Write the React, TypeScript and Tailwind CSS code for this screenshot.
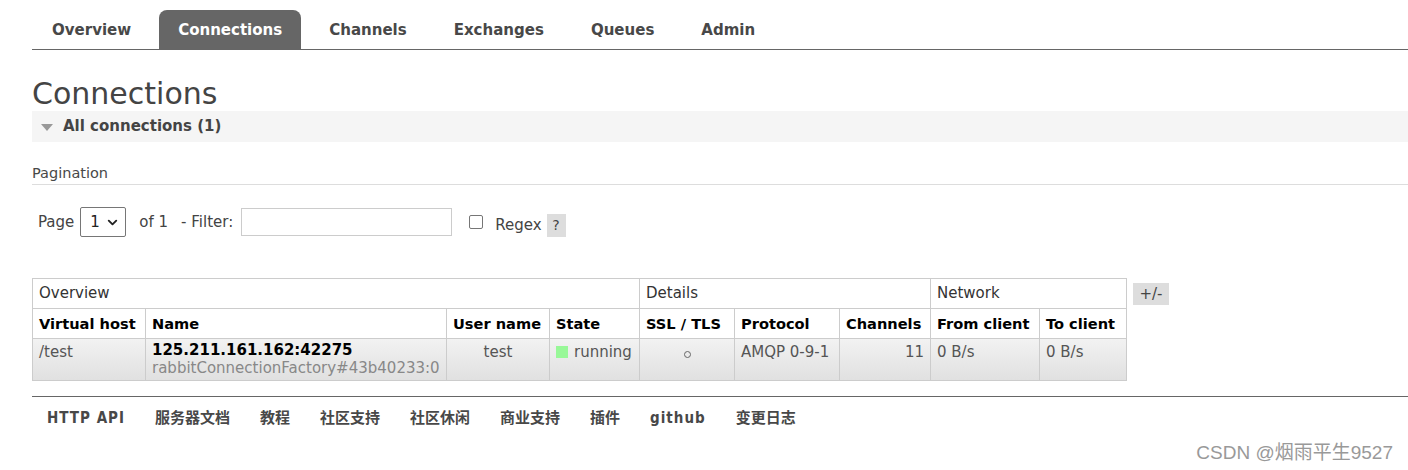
import { ChevronDown } from "lucide-react";

const tabs = ["Overview", "Connections", "Channels", "Exchanges", "Queues", "Admin"];
const footerLinks = [
  { label: "HTTP API", latin: true },
  { label: "服务器文档", latin: false },
  { label: "教程", latin: false },
  { label: "社区支持", latin: false },
  { label: "社区休闲", latin: false },
  { label: "商业支持", latin: false },
  { label: "插件", latin: false },
  { label: "github", latin: true },
  { label: "变更日志", latin: false },
];

const body = { fontFamily: '"DejaVu Sans", Verdana, "Noto Sans CJK SC", sans-serif' };
const narrow = {
  fontFamily: '"DejaVu Sans Condensed", "DejaVu Sans", "Noto Sans CJK SC", sans-serif',
  fontStretch: "condensed",
};

function Tabs() {
  return (
    <nav className="ml-[32px] mt-[10px] flex h-[40px] items-stretch gap-[9px] border-b border-[#666] pl-[1px]" style={narrow}>
      {tabs.map((t) => (
        <div
          key={t}
          className={
            t === "Connections"
              ? "flex items-center rounded-t-[8px] bg-[#666] px-[19px] text-[16.7px] font-bold text-white"
              : "flex items-center px-[19px] text-[16.7px] font-bold text-[#484848]"
          }
        >
          {t}
        </div>
      ))}
    </nav>
  );
}

function Pager() {
  return (
    <div className="mt-[22px] flex items-center pl-[6px] text-[15px] text-[#444]">
      <span>Page</span>
      <div className="ml-[6px] flex h-[30px] w-[46px] items-center justify-between rounded-[2px] border border-[#767676] pl-[9px] pr-[5px] text-[#222]">
        <span>1</span>
        <ChevronDown size={15} strokeWidth={3} />
      </div>
      <span className="ml-[13px]">of 1</span>
      <span className="ml-[13px]">- Filter:</span>
      <div className="ml-[8px] h-[28px] w-[211px] border border-[#ccc] bg-white" />
      <div className="ml-[17px] h-[14px] w-[14px] rounded-[2px] border border-[#767676]" />
      <span className="ml-[12px] mt-[6px]">Regex</span>
      <span className="ml-[5px] mt-[6px] flex h-[23px] w-[19px] items-center justify-center bg-[#ddd] text-[14px]">?</span>
    </div>
  );
}

function ConnTable() {
  const th = "whitespace-nowrap border border-[#ccc] px-[6px] text-left align-middle font-bold text-[14.6px] text-black";
  const grp = "border border-[#ccc] px-[6px] text-left align-middle font-normal text-[15px] text-[#333]";
  const td = "whitespace-nowrap border border-[#ccc] px-[6px] pt-[2px] align-top text-[15px] text-[#555]";
  return (
    <div className="mt-[41px] flex items-start">
      <table className="w-[1094px] table-fixed border-collapse border border-[#ccc]">
        <colgroup>
          <col className="w-[113px]" />
          <col className="w-[301px]" />
          <col className="w-[103px]" />
          <col className="w-[90px]" />
          <col className="w-[95px]" />
          <col className="w-[105px]" />
          <col className="w-[91px]" />
          <col className="w-[109px]" />
          <col className="w-[87px]" />
        </colgroup>
        <thead>
          <tr className="h-[30px]">
            <th colSpan={4} className={grp}>Overview</th>
            <th colSpan={3} className={grp}>Details</th>
            <th colSpan={2} className={grp}>Network</th>
          </tr>
          <tr className="h-[30px]">
            <th className={th}>Virtual host</th>
            <th className={th}>Name</th>
            <th className={th}>User name</th>
            <th className={th}>State</th>
            <th className={th}>SSL / TLS</th>
            <th className={th}>Protocol</th>
            <th className={th}>Channels</th>
            <th className={th}>From client</th>
            <th className={th}>To client</th>
          </tr>
        </thead>
        <tbody>
          <tr className="h-[42px] bg-gradient-to-b from-[#f2f2f2] to-[#e0e0e0]">
            <td className={td}>/test</td>
            <td className={td + " leading-[18px]"}>
              <div className="font-bold text-[15px] text-black">125.211.161.162:42275</div>
              <div className="text-[15px] text-[#888]">rabbitConnectionFactory#43b40233:0</div>
            </td>
            <td className={td + " text-center"}>test</td>
            <td className={td}>
              <span className="inline-flex items-center gap-[6px]">
                <span className="inline-block h-[12px] w-[12px] bg-[#98f898]" />
                running
              </span>
            </td>
            <td className={td + " text-center"}>
              <span className="mt-[10px] inline-block h-[7px] w-[7px] rounded-full border border-[#666]" />
            </td>
            <td className={td}>AMQP 0-9-1</td>
            <td className={td + " text-right"}>11</td>
            <td className={td}>0 B/s</td>
            <td className={td}>0 B/s</td>
          </tr>
        </tbody>
      </table>
      <span className="ml-[6px] mt-[5px] flex h-[22px] w-[36px] items-center justify-center bg-[#ddd] text-[15px] text-[#444]">+/-</span>
    </div>
  );
}

export default function App() {
  return (
    <div className="relative h-[470px] w-[1408px] overflow-hidden bg-white" style={body}>
      <Tabs />
      <div className="pl-[32px]">
        <h1 className="mt-[28px] text-[30px] font-normal leading-[32px] text-[#444]">Connections</h1>
        <div className="mt-[1px] flex h-[31px] items-center bg-[#f5f5f5] pl-[8px]">
          <svg width="14" height="10" viewBox="0 0 14 10" className="mr-[9px]">
            <path d="M1 2 L13 2 L7 9 Z" fill="#999" />
          </svg>
          <span className="text-[15px] font-bold text-[#444]">All connections (1)</span>
        </div>
        <div className="mt-[21px] border-b border-[#ddd] text-[14.5px] leading-[21px] text-[#484848]">Pagination</div>
        <Pager />
        <ConnTable />
        <footer className="mt-[15px] flex border-t border-[#666] pl-[15px] pt-[10px]" style={narrow}>
          {footerLinks.map((l) => (
            <span
              key={l.label}
              className={
                l.latin
                  ? "mr-[30px] text-[15px] font-bold tracking-[1px] text-[#484848]"
                  : "mr-[30px] text-[15px] font-bold text-[#484848]"
              }
            >
              {l.label}
            </span>
          ))}
        </footer>
      </div>
      <div
        className="absolute bottom-[3px] right-[15px] text-[19px] text-[#999]"
        style={{ fontFamily: '"Liberation Sans", "Noto Sans CJK SC", sans-serif' }}
      >
        CSDN @烟雨平生9527
      </div>
    </div>
  );
}
